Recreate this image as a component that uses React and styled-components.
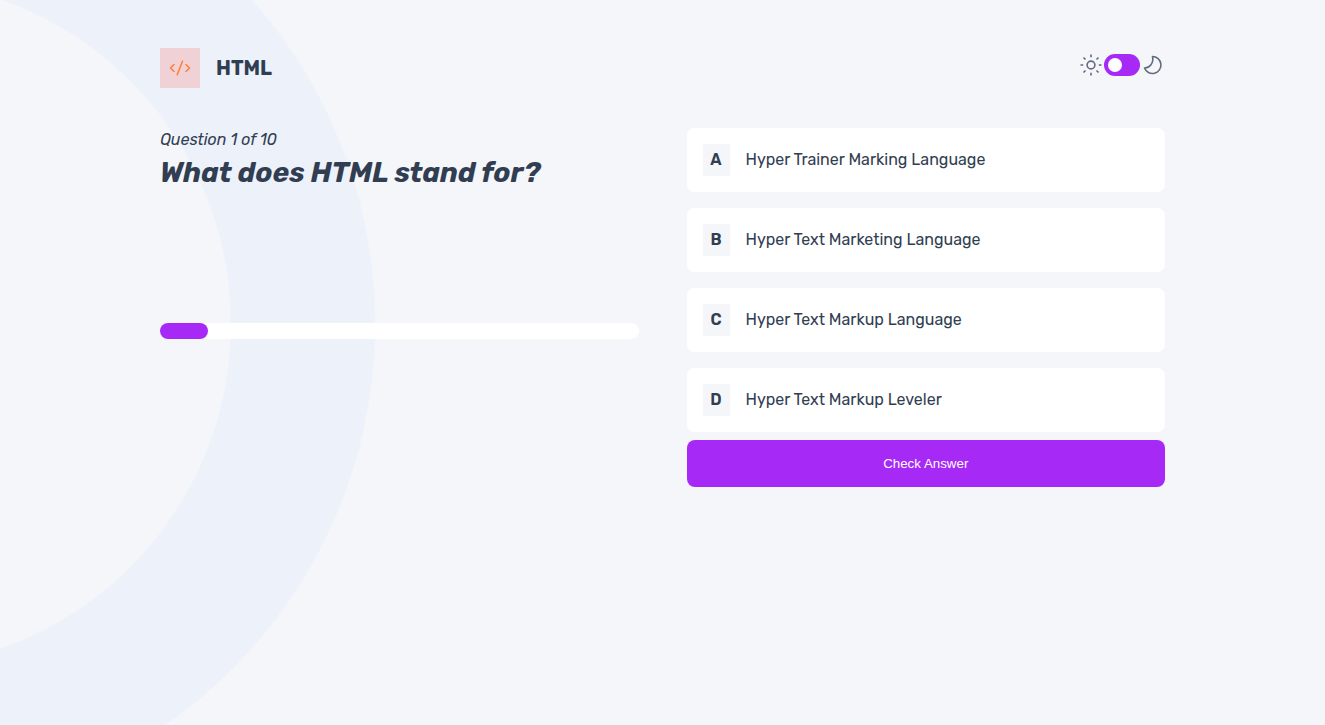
import React, { useState } from "react";
import styled, { createGlobalStyle } from "styled-components";

const GlobalStyle = createGlobalStyle`
  *, *::before, *::after { box-sizing: border-box; }
  body {
    margin: 0;
    color: #313e51;
    background-color: #f4f6fa;
    font-family: Rubik, Inter, sans-serif;
    font-size: 16px;
    line-height: 24px;
  }
`;

const Page = styled.div`
  min-height: 100vh;
  padding: 48px 160px;
  background-image: radial-gradient(
    circle at -113px 324px,
    transparent 343px,
    #ecf1fa 345px,
    #ecf1fa 487px,
    transparent 489px
  );
  @media (max-width: 900px) { padding: 32px 24px; }
`;

const Header = styled.header`
  display: flex;
  align-items: flex-start;
  justify-content: space-between;
  margin-bottom: 40px;
`;

const Subject = styled.div`
  display: flex;
  align-items: center;
  gap: 16px;
`;

const SubjectIcon = styled.span`
  display: grid;
  place-items: center;
  width: 40px;
  height: 40px;
  background: #efd1d6;
  color: #ff7e35;
`;

const SubjectName = styled.h1`
  margin: 0;
  font-size: 20px;
  font-weight: 700;
`;

const ThemeSwitch = styled.label`
  display: flex;
  align-items: center;
  gap: 1px;
  padding-top: 5px;
  color: #626c7f;
  cursor: pointer;
`;

const SwitchInput = styled.input`
  appearance: none;
  display: flex;
  align-items: center;
  width: 36px;
  height: 22px;
  margin: 0;
  padding: 4px;
  border-radius: 11px;
  background: #a729f5;
  cursor: pointer;
  &::before {
    content: "";
    width: 14px;
    height: 14px;
    border-radius: 50%;
    background: #fff;
  }
  &:checked { justify-content: flex-end; }
`;

const Quiz = styled.main`
  display: grid;
  grid-template-columns: 1fr 1fr;
  gap: 48px;
  align-items: start;
  @media (max-width: 900px) { grid-template-columns: 1fr; }
`;

const Prompt = styled.section`
  display: flex;
  flex-direction: column;
  font-style: italic;
`;

const Counter = styled.p`
  margin: 0;
`;

const Question = styled.h2`
  min-height: 171px;
  margin: 0;
  padding-top: 4px;
  font-size: 28px;
  line-height: 33px;
  font-weight: 700;
`;

const Track = styled.div`
  height: 16px;
  border-radius: 8px;
  background: #fff;
`;

const Fill = styled.div`
  height: 100%;
  border-radius: 8px;
  background: #a729f5;
`;

const Answers = styled.form`
  display: flex;
  flex-direction: column;
  gap: 8px;
`;

const OptionList = styled.div`
  display: flex;
  flex-direction: column;
  gap: 16px;
`;

const Option = styled.label`
  display: flex;
  align-items: center;
  gap: 16px;
  min-height: 64px;
  padding: 16px;
  border-radius: 8px;
  background: #fff;
  cursor: pointer;
  &:has(input:checked) { box-shadow: inset 0 0 0 2px #a729f5; }
`;

const OptionInput = styled.input`
  appearance: none;
  position: absolute;
  margin: 0;
`;

const Letter = styled.span`
  display: grid;
  place-items: center;
  width: 27px;
  height: 32px;
  background: #f4f6fa;
  font-weight: 600;
`;

const Submit = styled.button`
  height: 47px;
  border: 0;
  border-radius: 8px;
  background: #a729f5;
  color: #fff;
  font-family: "Liberation Sans", Arial, sans-serif;
  font-weight: 500;
  cursor: pointer;
`;

const CodeIcon = () => (
  <svg width="24" height="24" viewBox="0 0 24 24" fill="none" stroke="currentColor" strokeWidth="1.5" strokeLinecap="round" strokeLinejoin="round" aria-hidden="true">
    <path d="M6 8.500 2.500 12 6 15.500M18 8.500l3.500 3.500-3.500 3.500M14.500 5.200 9.200 18.800" />
  </svg>
);

const SunIcon = () => (
  <svg width="24" height="24" viewBox="0 0 24 24" fill="none" stroke="currentColor" strokeWidth="1.6" aria-hidden="true">
    <circle cx="12" cy="12" r="3.900" />
    <path d="M12 1.500v2.700M12 19.800v2.700M1.500 12h2.700M19.800 12h2.700M4.500 4.500l2 2M17.500 17.500l2 2M4.500 19.500l2-2M17.500 6.500l2-2" />
  </svg>
);

const MoonIcon = () => (
  <svg width="24" height="24" viewBox="0 0 24 24" fill="none" stroke="currentColor" strokeWidth="1.6" strokeLinejoin="round" aria-hidden="true">
    <path d="M11.500 3.500a8.500 8.500 0 1 1-8 11.500C8.500 15.200 13 10 11.500 3.500Z" />
  </svg>
);

const options = [
  ["A", "Hyper Trainer Marking Language"],
  ["B", "Hyper Text Marketing Language"],
  ["C", "Hyper Text Markup Language"],
  ["D", "Hyper Text Markup Leveler"],
];

export default function App() {
  const [dark, setDark] = useState(false);
  const [current, total] = [1, 10];
  return (
    <>
      <GlobalStyle />
      <Page>
        <Header>
          <Subject>
            <SubjectIcon><CodeIcon /></SubjectIcon>
            <SubjectName>HTML</SubjectName>
          </Subject>
          <ThemeSwitch>
            <SunIcon />
            <SwitchInput type="checkbox" role="switch" aria-label="Dark mode" checked={dark} onChange={(e) => setDark(e.target.checked)} />
            <MoonIcon />
          </ThemeSwitch>
        </Header>
        <Quiz>
          <Prompt>
            <Counter>Question {current} of {total}</Counter>
            <Question id="question">What does HTML stand for?</Question>
            <Track role="progressbar" aria-label="Quiz progress" aria-valuemin={0} aria-valuemax={total} aria-valuenow={current}>
              <Fill style={{ width: `${(current / total) * 100}%` }} />
            </Track>
          </Prompt>
          <Answers onSubmit={(e) => e.preventDefault()}>
            <OptionList role="radiogroup" aria-labelledby="question">
              {options.map(([letter, text]) => (
                <Option key={letter}>
                  <OptionInput type="radio" name="answer" value={letter} />
                  <Letter>{letter}</Letter>
                  <span>{text}</span>
                </Option>
              ))}
            </OptionList>
            <Submit type="submit">Check Answer</Submit>
          </Answers>
        </Quiz>
      </Page>
    </>
  );
}
